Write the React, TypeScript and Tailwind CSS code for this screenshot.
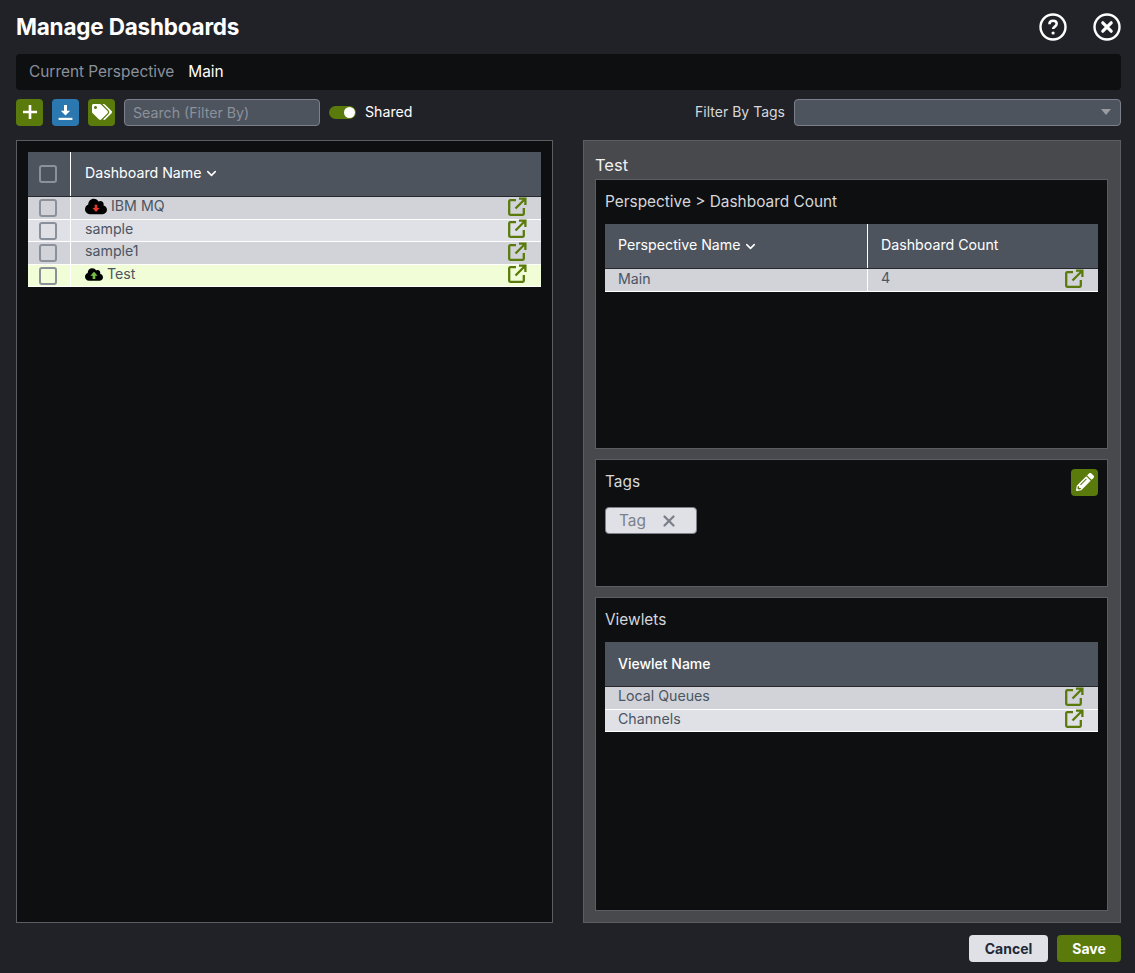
import { ChevronDown, X } from 'lucide-react'
import { FaCloud, FaPencilAlt, FaTags } from 'react-icons/fa'

const LinkIcon = () => (
  <svg viewBox="0 0 20 20" className="mb-[3px] h-5 w-5 text-[#5a7a0c]" fill="none" stroke="currentColor" strokeWidth="2.3">
    <path d="M9 3.2H3.2a1 1 0 0 0-1 1v12.6a1 1 0 0 0 1 1h12.6a1 1 0 0 0 1-1V11" />
    <path d="M12 1.6h6.4V8M18.2 1.8 8.5 11.5" />
  </svg>
)

const Check = () => (
  <span className="mr-[2px] block h-[18px] w-[18px] rounded-[3px] border-2 border-[#8b919b]" />
)

function CloudIcon({ up }: { up?: boolean }) {
  return (
    <span className={`relative inline-flex h-[18px] items-center justify-center ${up ? 'mr-[4px] w-[18px]' : 'mr-[4px] w-[22px]'}`}>
      <FaCloud size={up ? 19 : 23} className="text-black" />
      <svg viewBox="0 0 10 10" className="absolute left-1/2 top-1/2 h-[9px] w-[9px] -translate-x-1/2 -translate-y-[35%]">
        {up ? (
          <path d="M5 1 9 5.5H6.5V9h-3V5.5H1Z" fill="#76c043" />
        ) : (
          <path d="M5 9 9 4.5H6.5V1h-3v3.5H1Z" fill="#e5392b" />
        )}
      </svg>
    </span>
  )
}

function DataRow({
  bg,
  children,
  h,
}: {
  bg: string
  children: React.ReactNode
  h: string
}) {
  return (
    <div className={`flex items-center border-b border-white text-[14.2px] leading-none text-[#4b5563] ${bg} ${h}`}>
      {children}
    </div>
  )
}

const dashboards = [
  { name: 'IBM MQ', cloud: 'down', bg: 'bg-[#d1d3d8]', h: 'h-[23px]' },
  { name: 'sample', cloud: '', bg: 'bg-[#e0e1e6]', h: 'h-[22px]' },
  { name: 'sample1', cloud: '', bg: 'bg-[#d1d3d8]', h: 'h-[23px]' },
  { name: 'Test', cloud: 'up', bg: 'bg-[#f1fdd6]', h: 'h-[22px]' },
]

function Section({
  title,
  h,
  titleH = 'h-[43px]',
  action,
  children,
}: {
  title: string
  h: string
  titleH?: string
  action?: React.ReactNode
  children: React.ReactNode
}) {
  return (
    <section className={`border border-[#5c5d62] bg-[#0e0f11] px-[9px] ${h}`}>
      <div className={`flex items-center justify-between text-[15.4px] text-[#d5d7db] ${titleH}`}>
        <span>{title}</span>
        {action}
      </div>
      {children}
    </section>
  )
}

export default function App() {
  return (
    <div className="flex h-[973px] w-[1135px] flex-col overflow-hidden bg-[#212228] pl-4 pr-[14px] font-['Inter','Liberation_Sans',sans-serif] text-white">
      <header className="flex h-[54px] shrink-0 items-center justify-between">
        <h1 className="text-[22.5px] font-bold tracking-[-0.2px]">Manage Dashboards</h1>
        <div className="flex items-center gap-[26px]">
          <svg viewBox="0 0 28 28" className="h-7 w-7" fill="none" stroke="white">
            <circle cx="14" cy="14" r="12.5" strokeWidth="2.4" />
            <path d="M10.4 11.2c0-2.2 1.6-3.4 3.7-3.4s3.6 1.2 3.6 3c0 2.9-3.6 2.7-3.6 5.3" strokeWidth="2.5" />
            <circle cx="14.1" cy="20" r="1.6" fill="white" stroke="none" />
          </svg>
          <svg viewBox="0 0 28 28" className="h-7 w-7" fill="none" stroke="white">
            <circle cx="14" cy="14" r="12.5" strokeWidth="2.4" />
            <path d="M9.8 9.8l8.4 8.4M18.2 9.8l-8.4 8.4" strokeWidth="3.2" strokeLinecap="round" />
          </svg>
        </div>
      </header>

      <div className="flex h-9 shrink-0 items-center gap-[14px] rounded bg-[#0e0f11] px-[13px] text-[15.4px]">
        <span className="text-[#8b919b]">Current Perspective</span>
        <span>Main</span>
      </div>

      <div className="flex h-[50px] shrink-0 items-center pb-[6px]">
        <button className="flex h-[27px] w-[27px] items-center justify-center rounded bg-[#5a7a0c]">
          <svg viewBox="0 0 16 16" className="h-4 w-4" stroke="white" strokeWidth="2.6">
            <path d="M8 1v14M1 8h14" />
          </svg>
        </button>
        <button className="ml-[9px] flex h-[27px] w-[27px] items-center justify-center rounded bg-[#2b78b0]">
          <svg viewBox="0 0 16 16" className="h-[17px] w-[17px]" fill="white">
            <path d="M6.6 1h2.8v5.4h3L8 10.8 3.6 6.4h3Z" />
            <rect x="1.5" y="13" width="13" height="2" />
          </svg>
        </button>
        <button className="ml-[9px] flex h-[27px] w-[27px] items-center justify-center rounded bg-[#5a7a0c]">
          <FaTags size={20} className="text-white" />
        </button>
        <div className="ml-[9px] flex h-[27px] w-[196px] items-center rounded border border-[#7b808a] bg-[#4e545e] px-2 pt-[1px] text-[14.2px] text-[#8b919b]">
          Search (Filter By)
        </div>
        <span className="ml-[9px] flex h-[13px] w-[27px] items-center justify-end rounded-full bg-[#5a7a0c] pr-[1px]">
          <span className="h-[11px] w-[11px] rounded-full bg-white" />
        </span>
        <span className="ml-[9px] text-[14.2px]">Shared</span>
        <span className="mb-[1px] ml-auto text-[14px] text-[#d5d7db]">Filter By Tags</span>
        <div className="ml-[9px] flex h-[27px] w-[327px] items-center justify-end rounded border border-[#7b808a] bg-[#4e545e] pr-[9px]">
          <span className="h-0 w-0 border-x-[5px] border-t-[6px] border-x-transparent border-t-[#9a9ca1]" />
        </div>
      </div>

      <main className="flex h-[783px] shrink-0 gap-[30px]">
        <div className="w-[537px] border border-[#5c5d62] bg-[#0e0f11] p-[11px]">
          <div className="flex h-[45px] items-center border-b border-[#26282e] bg-[#4e545e] text-[14.2px]">
            <div className="flex h-full w-[43px] items-center justify-center border-r border-white">
              <Check />
            </div>
            <span className="mb-[2px] ml-[14px] flex items-center gap-[2px]">
              Dashboard Name <ChevronDown size={15} strokeWidth={2.5} className="mt-[2px]" />
            </span>
          </div>
          {dashboards.map((d) => (
            <DataRow key={d.name} bg={d.bg} h={d.h}>
              <div className="flex h-full w-[43px] items-center justify-center border-r border-white">
                <Check />
              </div>
              <span className="mb-[3px] ml-[14px] flex flex-1 items-center">
                {d.cloud && <CloudIcon up={d.cloud === 'up'} />}
                {d.name}
              </span>
              <span className="mr-[14px]">
                <LinkIcon />
              </span>
            </DataRow>
          ))}
        </div>

        <div className="w-[538px] border border-[#5c5d62] bg-[#48494d] pl-[11px] pr-[12px]">
          <h2 className="flex h-[38px] items-end pb-[6px] text-[16.5px] leading-none text-[#f0f1f3]">Test</h2>
          <div className="flex flex-col gap-[10px]">
            <Section title="Perspective > Dashboard Count" h="h-[270px]" titleH="h-[44px]">
              <div className="flex h-[45px] items-center border-b border-[#26282e] bg-[#4e545e] text-[14.2px]">
                <span className="flex h-full w-[263px] items-center gap-[2px] border-r border-white pb-[2px] pl-[13px]">
                  Perspective Name <ChevronDown size={15} strokeWidth={2.5} className="mt-[2px]" />
                </span>
                <span className="pb-[2px] pl-[13px]">Dashboard Count</span>
              </div>
              <DataRow bg="bg-[#d1d3d8]" h="h-[23px]">
                <span className="flex h-full w-[263px] items-center border-r border-white pb-[2px] pl-[13px]">Main</span>
                <span className="mb-[3px] flex-1 pl-[13px]">4</span>
                <span className="mr-[14px]">
                  <LinkIcon />
                </span>
              </DataRow>
            </Section>

            <Section
              title="Tags"
              h="h-[128px]"
              action={
                <button className="mt-[1px] flex h-[27px] w-[27px] items-center justify-center rounded bg-[#5a7a0c]">
                  <FaPencilAlt size={18} className="text-white" />
                </button>
              }
            >
              <span className="mt-[4px] flex h-[27px] w-[92px] items-center justify-between rounded border border-[#7b808a] bg-[#e0e1e6] pl-[13px] pr-[18px] text-[15.4px] text-[#7b808a]">
                Tag <X size={18} strokeWidth={3} />
              </span>
            </Section>

            <Section title="Viewlets" h="h-[314px]" titleH="h-[44px]">
              <div className="flex h-[45px] items-center border-b border-[#26282e] bg-[#4e545e] pb-[2px] pl-[13px] text-[14px] font-medium">
                Viewlet Name
              </div>
              <DataRow bg="bg-[#d1d3d8]" h="h-[23px]">
                <span className="mb-[3px] flex-1 pl-[13px]">Local Queues</span>
                <span className="mr-[14px]">
                  <LinkIcon />
                </span>
              </DataRow>
              <DataRow bg="bg-[#e0e1e6]" h="h-[22px]">
                <span className="mb-[3px] flex-1 pl-[13px]">Channels</span>
                <span className="mr-[14px]">
                  <LinkIcon />
                </span>
              </DataRow>
            </Section>
          </div>
        </div>
      </main>

      <footer className="flex flex-1 items-center justify-end gap-[9px]">
        <button className="h-[27px] w-[79px] rounded bg-[#e0e1e6] text-[14px] font-bold text-[#1f2937]">Cancel</button>
        <button className="h-[27px] w-[64px] rounded bg-[#5a7a0c] text-[14px] font-bold text-white">Save</button>
      </footer>
    </div>
  )
}
